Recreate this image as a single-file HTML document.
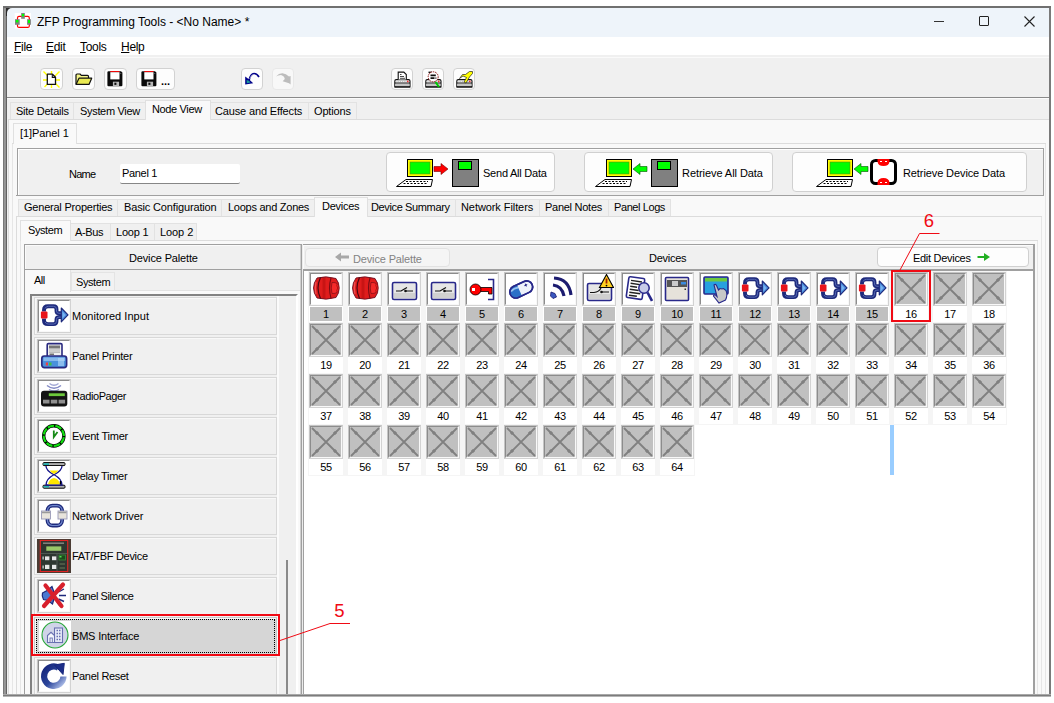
<!DOCTYPE html><html><head><meta charset="utf-8"><title>ZFP Programming Tools</title><style>
*{box-sizing:border-box;margin:0;padding:0}
html,body{width:1054px;height:703px;overflow:hidden;background:#fff}
body{font-family:"Liberation Sans","DejaVu Sans",sans-serif;font-size:11px;color:#000;position:relative}
.a{position:absolute}
.t{position:absolute;white-space:nowrap;line-height:13px;height:13px;letter-spacing:-0.25px}
.tab{position:absolute;background:#f0f0f0;border:1px solid #e2e2e2;border-bottom:none}
.tab.sel{background:#f9f9f9;border-color:#e0e0e0}
.tb{position:absolute;background:#fdfdfd;border:1px solid #d2d2d2;border-radius:4px}
.big{position:absolute;background:#fdfdfd;border:1px solid #d0d0d0;border-radius:4px}
.sunk{position:absolute;width:34px;height:34px;border:1px solid;border-color:#c4c4c4 #d2d2d2 #d2d2d2 #c4c4c4;background:#fff}
.sunk:before{content:"";position:absolute;left:0;top:0;right:0;bottom:0;border:1px solid;border-color:#8c8c8c #f8f8f8 #f8f8f8 #8c8c8c}
.sunk svg{position:absolute;left:1px;top:1px}
.sunk.e{background:#c0c0c0}
.pi{position:absolute;left:34px;width:243px;height:38px;border:1px solid #d8d8d8;box-shadow:inset 1px 1px 0 #f8f8f8;background:#f0f0f0}
.lab{position:absolute;width:32px;height:14px;text-align:center;line-height:14px;font-size:11px;letter-spacing:-0.25px}
.lab.g{background:#c0c0c0}
.lab.w{background:#fff;box-shadow:0 0 0 1px #fff}
u{text-decoration:underline}
</style></head><body>
<div class="a" style="left:3px;top:6px;width:1048px;height:690px;background:#7a7a7a"></div>
<div class="a" style="left:3px;top:6px;width:4px;height:690px;background:linear-gradient(90deg,#787878 1px,#989898 1px,#929292 3px,#626262 3px)"></div>
<div class="a" style="left:3px;top:6px;width:1048px;height:2px;background:#707070"></div>
<div class="a" style="left:6px;top:8px;width:8px;height:8px;background:#2c2c2c"></div>
<div class="a" style="left:7px;top:8px;width:1042px;height:29px;background:#eef4fa;border-radius:5px 0 0 0"></div>
<div class="a" style="left:7px;top:37px;width:1042px;height:18px;background:#fff"></div>
<div class="a" style="left:7px;top:55px;width:1042px;height:640px;background:#f0f0f0"></div>
<div class="a" style="left:7px;top:57px;width:1042px;height:1px;background:#fafafa"></div>
<svg class="a" style="left:14px;top:12px" width="18" height="18" viewBox="14 12 18 18">
<rect x="14.7" y="13" width="16.3" height="15.5" fill="#fff"/>
<rect x="17.5" y="16.4" width="11.8" height="11" rx="1.5" fill="#fff" stroke="#f00" stroke-width="1.2"/>
<rect x="21.2" y="13" width="3.6" height="5.8" fill="#808080"/><rect x="21.9" y="14" width="2.2" height="2.3" fill="#0f0"/>
<rect x="15" y="19.2" width="4.7" height="5.6" fill="#808080"/><rect x="15.8" y="20" width="2.6" height="2.4" fill="#0f0"/>
<rect x="27.1" y="19.2" width="3.8" height="5.6" fill="#808080"/><rect x="28" y="20" width="2" height="3" fill="#0f0"/>
</svg>
<div class="t" id="title" style="left:37px;top:15px;font-size:12px;line-height:15px;height:15px;letter-spacing:0">ZFP Programming Tools - &lt;No Name&gt; *</div>
<div class="a" style="left:934px;top:21px;width:10px;height:1px;background:#333"></div>
<div class="a" style="left:979px;top:16px;width:10px;height:10px;border:1px solid #222;border-radius:1px"></div>
<svg class="a" style="left:1024px;top:16px" width="11" height="11" viewBox="0 0 11 11"><path d="M0.5 0.5L10.5 10.5M10.5 0.5L0.5 10.5" stroke="#222" stroke-width="1.1" fill="none"/></svg>
<div class="t m" style="left:14px;top:40px;font-size:12px;line-height:15px;height:15px;letter-spacing:-0.3px"><u>F</u>ile</div>
<div class="t m" style="left:46px;top:40px;font-size:12px;line-height:15px;height:15px;letter-spacing:-0.3px"><u>E</u>dit</div>
<div class="t m" style="left:80px;top:40px;font-size:12px;line-height:15px;height:15px;letter-spacing:-0.3px"><u>T</u>ools</div>
<div class="t m" style="left:121px;top:40px;font-size:12px;line-height:15px;height:15px;letter-spacing:-0.3px"><u>H</u>elp</div>
<div class="tb" style="left:39.5px;top:68px;width:23px;height:22px;"><svg style="position:absolute;left:-1px;top:-1px" width="23" height="22" viewBox="0 0 23 22"><path d="M3.5 3.5L8 8M19.5 3.5L14 9M3 12H7M16 12H20M4.5 19L8 15.5M19.5 19.5L15.5 15.5M11.5 3V6M11.5 17V20" stroke="#ff0" stroke-width="1.4"/>
<path d="M7.3 6.2H12.5L15.5 9.2V16.4H7.3Z" fill="#fff" stroke="#111" stroke-width="1.3" stroke-linejoin="round"/><path d="M12.3 6.5V9.4H15.3" fill="none" stroke="#111" stroke-width="1.1"/></svg></div>
<div class="tb" style="left:71.5px;top:68px;width:23px;height:22px;"><svg style="position:absolute;left:-1px;top:-1px" width="23" height="22" viewBox="0 0 23 22"><path d="M4 16V7Q4 6 5 6H8L9.3 7.3H15.5Q16.5 7.3 16.5 8.3V10" fill="#f6f68a" stroke="#111" stroke-width="1.2" stroke-linejoin="round"/>
<path d="M4 16.4L7 10.2H19.7L17 16.4Z" fill="#eaea52" stroke="#111" stroke-width="1.2" stroke-linejoin="round"/></svg></div>
<div class="tb" style="left:103.5px;top:68px;width:23px;height:22px;"><svg style="position:absolute;left:-1px;top:-1px" width="23" height="22" viewBox="0 0 23 22"><g transform="translate(0,0)"><path d="M3.4 4.3Q3.4 3.2 4.5 3.2H17L18.4 4.6V17.2Q18.4 18.3 17.3 18.3H4.5Q3.4 18.3 3.4 17.2Z" fill="#0a0a0a"/>
<rect x="6.3" y="3.1" width="9.2" height="1.1" fill="#f00"/><rect x="6.3" y="4.2" width="9.2" height="7.2" fill="#fff"/>
<rect x="8.9" y="13.7" width="6.2" height="4.6" fill="#b8b8b8"/><rect x="10.4" y="14.7" width="2" height="2.2" fill="#0a0a0a"/><rect x="16.4" y="5" width="0.8" height="0.8" fill="#999"/></g></svg></div>
<div class="tb" style="left:135.5px;top:68px;width:39px;height:22px;"><svg style="position:absolute;left:-1px;top:-1px" width="39" height="22" viewBox="0 0 39 22"><g transform="translate(2,0)"><path d="M3.4 4.3Q3.4 3.2 4.5 3.2H17L18.4 4.6V17.2Q18.4 18.3 17.3 18.3H4.5Q3.4 18.3 3.4 17.2Z" fill="#0a0a0a"/>
<rect x="6.3" y="3.1" width="9.2" height="1.1" fill="#f00"/><rect x="6.3" y="4.2" width="9.2" height="7.2" fill="#fff"/>
<rect x="8.9" y="13.7" width="6.2" height="4.6" fill="#b8b8b8"/><rect x="10.4" y="14.7" width="2" height="2.2" fill="#0a0a0a"/><rect x="16.4" y="5" width="0.8" height="0.8" fill="#999"/></g></svg></div>
<div class="t" style="left:161px;top:75px;letter-spacing:0;font-weight:bold">...</div>
<div class="tb" style="left:240.5px;top:68px;width:22px;height:22px;"><svg style="position:absolute;left:-1px;top:-1px" width="22" height="22" viewBox="0 0 22 22"><path d="M8 12.5Q9.5 5.5 13 5.5Q16 5.5 18 9" fill="none" stroke="#00008b" stroke-width="1.7"/><path d="M8.6 11Q10 6.8 12.5 6.5" fill="none" stroke="#b8b8d8" stroke-width="0.7"/>
<path d="M4.2 8.5V16.5L12.2 15.2L8.5 11.8Z" fill="#00008b"/><path d="M5.6 12L8 12.8L9.5 14.5L5.8 15.3Z" fill="#1a9a9a"/></svg></div>
<div class="tb" style="left:271.5px;top:68px;width:22px;height:22px;background:#f8f8f8;border-color:#e8e8e8"><svg style="position:absolute;left:-1px;top:-1px" width="22" height="22" viewBox="0 0 22 22"><path d="M4 8.6Q7 5 10.5 5.2Q14 5.5 17 8.5L18.6 8V16.5L17 15.2L10.7 13.2L12.8 11Q12.5 8 9 7Q6 7 4 8.6Z" fill="#bdbdbd"/></svg></div>
<div class="tb" style="left:390.5px;top:68px;width:22px;height:22px;"><svg style="position:absolute;left:-1px;top:-1px" width="22" height="22" viewBox="0 0 22 22"><path d="M3.8 19V13Q3.8 11.6 5.2 11.6H17.6Q19 11.6 19 13V19Z" fill="#fff" stroke="#111" stroke-width="1.1"/><rect x="4.4" y="15.6" width="14" height="2.6" fill="#c4c4c4"/><path d="M3.8 15H19M3.8 18.9H19" stroke="#111" stroke-width="1.1"/>
<path d="M5.5 13.3H15.5" stroke="#bbb" stroke-width="1.2" stroke-dasharray="1 0.8"/><rect x="16" y="12.6" width="1.6" height="1.6" fill="#f03030"/><path d="M7.2 11.6V4.1H12.8L15.3 6.6V11.6" fill="#fff" stroke="#111" stroke-width="1.1"/><path d="M9 6.5H10.5M9 8.5H13M9 10.3H14" stroke="#333" stroke-width="0.9"/></svg></div>
<div class="tb" style="left:421.5px;top:68px;width:22px;height:22px;"><svg style="position:absolute;left:-1px;top:-1px" width="22" height="22" viewBox="0 0 22 22"><path d="M3.8 19V13Q3.8 11.6 5.2 11.6H17.6Q19 11.6 19 13V19Z" fill="#fff" stroke="#111" stroke-width="1.1"/><rect x="4.4" y="15.6" width="14" height="2.6" fill="#c4c4c4"/><path d="M3.8 15H19M3.8 18.9H19" stroke="#111" stroke-width="1.1"/>
<path d="M5.5 13.3H15.5" stroke="#bbb" stroke-width="1.2" stroke-dasharray="1 0.8"/><rect x="16" y="12.6" width="1.6" height="1.6" fill="#f03030"/><path d="M6.5 4.3H10" stroke="#111" stroke-width="1.4"/><circle cx="11.2" cy="8.8" r="5" fill="#fff" stroke="#8a1010" stroke-width="1" stroke-dasharray="1.6 0.9"/><path d="M8.5 7.3H13.8M8.5 10.2H12.5M13.5 10.2H14.3" stroke="#111" stroke-width="1.7"/><path d="M13.5 14L17 19" stroke="#0c0" stroke-width="2"/></svg></div>
<div class="tb" style="left:452.5px;top:68px;width:22px;height:22px;"><svg style="position:absolute;left:-1px;top:-1px" width="22" height="22" viewBox="0 0 22 22"><path d="M3.8 19V13Q3.8 11.6 5.2 11.6H17.6Q19 11.6 19 13V19Z" fill="#fff" stroke="#111" stroke-width="1.1"/><rect x="4.4" y="15.6" width="14" height="2.6" fill="#c4c4c4"/><path d="M3.8 15H19M3.8 18.9H19" stroke="#111" stroke-width="1.1"/>
<path d="M5.5 13.3H15.5" stroke="#bbb" stroke-width="1.2" stroke-dasharray="1 0.8"/><rect x="16" y="12.6" width="1.6" height="1.6" fill="#f03030"/><path d="M6.5 10.5L10 8L13.5 9.5L11 14L13 15L16.5 9L19.5 5.5V3.5H16.5L12.5 6.5L9.5 6.5Z" fill="#ff0" stroke="#222" stroke-width="0.7"/></svg></div>
<div class="a" style="left:7px;top:97px;width:1042px;height:1px;background:#8a8a8a"></div>
<div class="a" style="left:7px;top:98px;width:1042px;height:1px;background:#fbfbfb"></div>
<div class="a" style="left:8px;top:119px;width:1041px;height:576px;background:#f9f9f9;border-top:1px solid #dcdcdc;border-left:1px solid #dcdcdc"></div>
<div class="tab" style="left:10px;top:102px;width:64px;height:17px"></div>
<div class="t" style="left:16px;top:105px;letter-spacing:-0.25px">Site Details</div>
<div class="tab" style="left:73px;top:102px;width:74px;height:17px"></div>
<div class="t" style="left:80px;top:105px;letter-spacing:-0.32px">System View</div>
<div class="tab" style="left:209px;top:102px;width:100px;height:17px"></div>
<div class="t" style="left:215px;top:105px;letter-spacing:-0.15px">Cause and Effects</div>
<div class="tab" style="left:308px;top:102px;width:49px;height:17px"></div>
<div class="t" style="left:314px;top:105px;letter-spacing:-0.16px">Options</div>
<div class="tab sel" style="left:145px;top:100px;width:66px;height:20px"></div>
<div class="t" style="left:152px;top:103px;letter-spacing:-0.36px">Node View</div>
<div class="a" style="left:12px;top:143px;width:1034px;height:1px;background:#dcdcdc"></div>
<div class="tab sel" style="left:13px;top:123px;width:64px;height:21px"></div>
<div class="t" style="left:20px;top:127px;letter-spacing:-0.08px">[1]Panel 1</div>
<div class="a" style="left:12px;top:144px;width:1px;height:551px;background:#e6e6e6"></div>
<div class="a" style="left:1045px;top:144px;width:1px;height:551px;background:#e6e6e6"></div>
<div class="a" style="left:17px;top:148px;width:1027px;height:48px;background:#f0f0f0;border:1px solid #a0a0a0;box-shadow:inset 1px 1px 0 #fff"></div>
<div class="a" style="left:16px;top:195px;width:1028px;height:1px;background:#a0a0a0"></div>
<div class="t" style="left:69px;top:168px;letter-spacing:-0.76px">Name</div>
<div class="a" style="left:120px;top:164px;width:120px;height:20px;background:#fff;border-bottom:1px solid #868686;border-radius:2px"></div>
<div class="t" style="left:122px;top:167px;letter-spacing:-0.32px">Panel 1</div>
<div class="big" style="left:386px;top:152px;width:169px;height:40px"></div>
<svg class="a" style="left:386px;top:152px;overflow:visible" width="169" height="40"><g transform="translate(21,7)"><g><rect x="0.5" y="0.5" width="25" height="17" fill="#ff0" stroke="#000"/><rect x="3" y="3" width="20" height="12" fill="#0f0" stroke="#6a8a00" stroke-width="0.6"/>
<path d="M-1 20.5H25.5L24 27.5H-10.5Z" fill="#fff" stroke="#000"/><path d="M-1 22.5H21M-3.5 24.5H20" stroke="#000" stroke-dasharray="2 1.5" stroke-width="1"/></g></g><g transform="translate(48,17)"><path d="M0 -2.5H7V-5.5L14 0L7 5.5V2.5H0Z" fill="#f00" stroke="#700" stroke-width="0.6"/></g><g transform="translate(66,7)"><g><rect x="0.5" y="0.5" width="26" height="27" fill="#808080" stroke="#000"/><rect x="6.5" y="2.5" width="13" height="8" fill="#0f0" stroke="#000"/></g></g></svg>
<div class="t" style="left:483px;top:167px;letter-spacing:-0.23px">Send All Data</div>
<div class="big" style="left:584px;top:152px;width:189px;height:40px"></div>
<svg class="a" style="left:584px;top:152px;overflow:visible" width="189" height="40"><g transform="translate(22,7)"><g><rect x="0.5" y="0.5" width="25" height="17" fill="#ff0" stroke="#000"/><rect x="3" y="3" width="20" height="12" fill="#0f0" stroke="#6a8a00" stroke-width="0.6"/>
<path d="M-1 20.5H25.5L24 27.5H-10.5Z" fill="#fff" stroke="#000"/><path d="M-1 22.5H21M-3.5 24.5H20" stroke="#000" stroke-dasharray="2 1.5" stroke-width="1"/></g></g><g transform="translate(49,17)"><path d="M14 -2.5H7V-5.5L0 0L7 5.5V2.5H14Z" fill="#0f0" stroke="#050" stroke-width="0.6"/></g><g transform="translate(67,7)"><g><rect x="0.5" y="0.5" width="26" height="27" fill="#808080" stroke="#000"/><rect x="6.5" y="2.5" width="13" height="8" fill="#0f0" stroke="#000"/></g></g></svg>
<div class="t" style="left:682px;top:167px;letter-spacing:-0.06px">Retrieve All Data</div>
<div class="big" style="left:792px;top:152px;width:235px;height:40px"></div>
<svg class="a" style="left:792px;top:152px;overflow:visible" width="235" height="40"><g transform="translate(35,7)"><g><rect x="0.5" y="0.5" width="25" height="17" fill="#ff0" stroke="#000"/><rect x="3" y="3" width="20" height="12" fill="#0f0" stroke="#6a8a00" stroke-width="0.6"/>
<path d="M-1 20.5H25.5L24 27.5H-10.5Z" fill="#fff" stroke="#000"/><path d="M-1 22.5H21M-3.5 24.5H20" stroke="#000" stroke-dasharray="2 1.5" stroke-width="1"/></g></g><g transform="translate(62,17)"><path d="M14 -2.5H7V-5.5L0 0L7 5.5V2.5H14Z" fill="#0f0" stroke="#050" stroke-width="0.6"/></g><g transform="translate(78,7)"><g><rect x="1.5" y="1.5" width="24" height="23" rx="4" fill="#fff" stroke="#000" stroke-width="3"/>
<path d="M7.5 0H19.5V2.5Q19 7 13.5 7Q8 7 7.5 2.5Z" fill="#f00"/><path d="M7.5 26H19.5V23.5Q19 19 13.5 19Q8 19 7.5 23.5Z" fill="#f00"/>
<path d="M10 2.5H12M15 2.5H17M10 23.5H12M15 23.5H17" stroke="#fff" stroke-width="1"/></g></g></svg>
<div class="t" style="left:903px;top:167px;letter-spacing:-0.1px">Retrieve Device Data</div>
<div class="a" style="left:16px;top:216px;width:1026px;height:479px;background:#f9f9f9;border-top:1px solid #dcdcdc;border-left:1px solid #dcdcdc"></div>
<div class="tab" style="left:18px;top:199px;width:100px;height:17px"></div>
<div class="t" style="left:24px;top:201px;letter-spacing:-0.22px">General Properties</div>
<div class="tab" style="left:117px;top:199px;width:105px;height:17px"></div>
<div class="t" style="left:124px;top:201px;letter-spacing:-0.15px">Basic Configuration</div>
<div class="tab" style="left:221px;top:199px;width:95px;height:17px"></div>
<div class="t" style="left:228px;top:201px;letter-spacing:-0.26px">Loops and Zones</div>
<div class="tab" style="left:366px;top:199px;width:90px;height:17px"></div>
<div class="t" style="left:371px;top:201px;letter-spacing:-0.37px">Device Summary</div>
<div class="tab" style="left:455px;top:199px;width:85px;height:17px"></div>
<div class="t" style="left:461px;top:201px;letter-spacing:-0.08px">Network Filters</div>
<div class="tab" style="left:539px;top:199px;width:70px;height:17px"></div>
<div class="t" style="left:545px;top:201px;letter-spacing:-0.27px">Panel Notes</div>
<div class="tab" style="left:608px;top:199px;width:63px;height:17px"></div>
<div class="t" style="left:614px;top:201px;letter-spacing:-0.41px">Panel Logs</div>
<div class="tab sel" style="left:314px;top:197px;width:54px;height:20px"></div>
<div class="t" style="left:322px;top:200px;letter-spacing:-0.27px">Devices</div>
<div class="a" style="left:20px;top:240px;width:1018px;height:1px;background:#dcdcdc"></div>
<div class="tab" style="left:69px;top:223px;width:42px;height:17px"></div>
<div class="t" style="left:75px;top:226px;letter-spacing:-0.37px">A-Bus</div>
<div class="tab" style="left:110px;top:223px;width:45px;height:17px"></div>
<div class="t" style="left:116px;top:226px;letter-spacing:-0.21px">Loop 1</div>
<div class="tab" style="left:154px;top:223px;width:43px;height:17px"></div>
<div class="t" style="left:160px;top:226px;letter-spacing:-0.08px">Loop 2</div>
<div class="tab sel" style="left:20px;top:220px;width:51px;height:21px"></div>
<div class="t" style="left:28px;top:224px;letter-spacing:-0.41px">System</div>
<div class="a" style="left:20px;top:241px;width:1px;height:454px;background:#e6e6e6"></div>
<div class="a" style="left:1037px;top:241px;width:1px;height:454px;background:#e6e6e6"></div>
<div class="a" style="left:1041px;top:217px;width:1px;height:478px;background:#e6e6e6"></div>
<div class="a" style="left:24px;top:244px;width:278px;height:451px;background:#f0f0f0;border-top:1px solid #a0a0a0;border-left:1px solid #a0a0a0;box-shadow:inset 1px 1px 0 #fbfbfb"></div>
<div class="a" style="left:300px;top:245px;width:1px;height:450px;background:#cfcfcf"></div>
<div class="a" style="left:301px;top:244px;width:1px;height:451px;background:#a0a0a0"></div>
<div class="a" style="left:302px;top:244px;width:1px;height:451px;background:#ececec"></div>
<div class="a" style="left:25px;top:269px;width:276px;height:1px;background:#a0a0a0"></div>
<div class="t" style="left:129px;top:252px;letter-spacing:-0.15px">Device Palette</div>
<div class="a" style="left:25px;top:290px;width:275px;height:405px;background:#f9f9f9;border-top:1px solid #e2e2e2"></div>
<div class="a" style="left:25px;top:270px;width:46px;height:22px;background:#f9f9f9;border-right:1px solid #e2e2e2"></div>
<div class="t" style="left:34px;top:274px;letter-spacing:-0.48px">All</div>
<div class="a" style="left:71px;top:272px;width:44px;height:19px;background:#f2f2f2;border:1px solid #e4e4e4"></div>
<div class="t" style="left:76px;top:276px;letter-spacing:-0.41px">System</div>
<div class="a" style="left:30px;top:294px;width:268px;height:401px;border:2px solid #828282;border-right:2px solid #fff;border-bottom:none;background:#f0f0f0"></div>
<div class="a" style="left:277px;top:296px;width:2px;height:399px;background:#fafafa"></div>
<div class="a" style="left:286px;top:560px;width:2px;height:135px;background:#8a8a8a"></div>
<div class="pi" style="top:297px"></div>
<div class="sunk" style="left:37px;top:299px"><svg width="30" height="30" viewBox="0 0 30 30"><path d="M5 10.5V9Q5 5.3 9 5.3H14.5Q17.5 5.3 17.5 8.3V10Q17.5 12.3 20 12.3H22.5M5 17.5V19.5Q5 23.1 9 23.1H14.5Q17.5 23.1 17.5 20.1V18.4Q17.5 16.1 20 16.1H22.5" fill="none" stroke="#1e2a7c" stroke-width="3.9"/>
<path d="M6 7.5Q7 5.3 9.5 5.3H14.5Q17.5 5.3 17.5 8.3V10Q17.5 12.3 20 12.3H22.5M6 21Q7 23.1 9.5 23.1H14.5Q17.5 23.1 17.5 20.1V18.4Q17.5 16.1 20 16.1H22.5" fill="none" stroke="#5468b4" stroke-width="1"/>
<path d="M22.3 7L29 13.9L22.3 20.8Z" fill="#4a8cdc" stroke="#1e2a7c" stroke-width="1.2" stroke-linejoin="round"/><path d="M23.5 10.5V17.5L26.5 14Z" fill="#7ab4f0"/>
<rect x="1.9" y="10.5" width="6.6" height="6.9" rx="1" fill="#e8141c"/></svg></div>
<div class="t" style="left:72px;top:310px;letter-spacing:0.04px">Monitored Input</div>
<div class="pi" style="top:337px"></div>
<div class="sunk" style="left:37px;top:339px"><svg width="30" height="30" viewBox="0 0 30 30"><path d="M8.2 15V3.8Q8.2 2.6 9.4 2.6H21.8Q23 2.6 23 3.8V15" fill="#f0f0f0" stroke="#2a2a80" stroke-width="1.6"/>
<rect x="10" y="4.5" width="11" height="3" fill="#777"/><path d="M10 9H21M10 11.2H21" stroke="#aaa" stroke-width="1.2"/><path d="M10.5 13.2H15" stroke="#555" stroke-width="1.2"/>
<rect x="2.8" y="15" width="24.8" height="11.6" rx="2.5" fill="#4a90dc" stroke="#2a2a80" stroke-width="1.7"/>
<rect x="4.5" y="16.5" width="21.5" height="3.5" fill="#a8d0f4" opacity=".65"/><rect x="19" y="17" width="6" height="8" fill="#b8dcf8" opacity=".6"/>
<rect x="6.8" y="21.5" width="2.2" height="3" fill="#f04040"/><rect x="10" y="21.5" width="2.5" height="3" fill="#40c040"/></svg></div>
<div class="t" style="left:72px;top:350px;letter-spacing:-0.25px">Panel Printer</div>
<div class="pi" style="top:377px"></div>
<div class="sunk" style="left:37px;top:379px"><svg width="30" height="30" viewBox="0 0 30 30"><path d="M8 4.5Q15 10 22 4.5" fill="none" stroke="#8088c4" stroke-width="1.5"/><path d="M10.5 2.5Q15 6 19.5 2.5" fill="none" stroke="#a0a6d4" stroke-width="1.3"/><path d="M10 8.5Q15 11.5 20 8.5" fill="none" stroke="#9096cc" stroke-width="1.3"/>
<rect x="2" y="9.8" width="26.3" height="15.7" rx="3" fill="#141414"/>
<rect x="9.8" y="12.3" width="16" height="2.8" fill="#6cc83c"/>
<rect x="4" y="18.7" width="6.5" height="3.8" fill="#909090"/><rect x="11.8" y="18.7" width="6.5" height="3.8" fill="#909090"/><rect x="19.6" y="18.7" width="6.5" height="3.8" fill="#909090"/></svg></div>
<div class="t" style="left:72px;top:390px;letter-spacing:-0.41px">RadioPager</div>
<div class="pi" style="top:417px"></div>
<div class="sunk" style="left:37px;top:419px"><svg width="30" height="30" viewBox="0 0 30 30"><circle cx="14.8" cy="14.9" r="10.1" fill="#fff" stroke="#000" stroke-width="3.4"/><circle cx="14.8" cy="14.9" r="10.1" fill="none" stroke="#10e010" stroke-width="2"/>
<circle cx="14.8" cy="14.9" r="10.1" fill="none" stroke="#000" stroke-width="2.2" stroke-dasharray="1.3 6.63"/>
<path d="M14.8 9.5V16L18.5 11" fill="none" stroke="#168a16" stroke-width="1.8"/></svg></div>
<div class="t" style="left:72px;top:430px;letter-spacing:-0.24px">Event Timer</div>
<div class="pi" style="top:457px"></div>
<div class="sunk" style="left:37px;top:459px"><svg width="30" height="30" viewBox="0 0 30 30"><rect x="4" y="1.6" width="22" height="3" rx="1" fill="#b0b0b0" stroke="#000" stroke-width="1"/><rect x="4" y="24.2" width="22" height="3" rx="1" fill="#b0b0b0" stroke="#000" stroke-width="1"/><path d="M4.5 3.1H10M4.5 25.7H10" stroke="#20b0b0" stroke-width="1.6"/>
<path d="M7 5Q7 9.5 14.8 13.7Q7 18 7 24H23Q23 18 15.2 13.7Q23 9.5 23 5" fill="#fff" stroke="#14148c" stroke-width="1.3"/>
<path d="M10.5 9.5H19.5Q17.5 11.5 15 13Q12.5 11.5 10.5 9.5Z" fill="#ffe800"/><path d="M9 23.3Q10 18 15 17Q20 18 21 23.3Z" fill="#ffe800"/><path d="M21.5 20V23.5" stroke="#000" stroke-width="1.4"/></svg></div>
<div class="t" style="left:72px;top:470px;letter-spacing:-0.31px">Delay Timer</div>
<div class="pi" style="top:497px"></div>
<div class="sunk" style="left:37px;top:499px"><svg width="30" height="30" viewBox="0 0 30 30"><rect x="8.5" y="4.7" width="14.6" height="19.8" rx="5" fill="none" stroke="#1e2a7c" stroke-width="3.8"/><rect x="8.5" y="4.7" width="14.6" height="19.8" rx="5" fill="none" stroke="#7088cc" stroke-width="1.2"/>
<rect x="2.5" y="10" width="9" height="8" fill="#e8e4dc" stroke="#9a9ab8" stroke-width="0.9"/><rect x="19" y="10" width="9" height="8" fill="#e8e4dc" stroke="#9a9ab8" stroke-width="0.9"/>
<path d="M3 11.5H11M19.5 11.5H27.5" stroke="#9a9a9a" stroke-width="1.6"/></svg></div>
<div class="t" style="left:72px;top:510px;letter-spacing:-0.1px">Network Driver</div>
<div class="pi" style="top:537px"></div>
<svg class="a" style="left:37px;top:539px" width="34" height="34" viewBox="0 0 34 34"><rect x="0" y="0" width="34" height="34" fill="#4a3c34"/><rect x="3.3" y="1.5" width="27.4" height="31" fill="#2e3630" stroke="#e02424" stroke-width="1.1"/>
<rect x="6" y="3.5" width="21" height="1.4" fill="#8a8a84"/><rect x="9.3" y="7.4" width="15" height="4.4" fill="#98c868"/>
<path d="M3.5 14.5H30.5M20 14.5V32" stroke="#55605a" stroke-width="0.8"/>
<rect x="8" y="17.4" width="4.4" height="3.8" fill="#e6e6e6"/><rect x="15" y="17.4" width="4.3" height="3.8" fill="#e6e6e6"/><rect x="8" y="25.8" width="4.4" height="4.2" fill="#e6e6e6"/><rect x="15" y="25.8" width="4.3" height="4.2" fill="#e6e6e6"/>
<rect x="5.5" y="17.5" width="1.2" height="3" fill="#ddd"/><rect x="5.5" y="26.5" width="1.2" height="3" fill="#ddd"/>
<rect x="22" y="16" width="6.5" height="5" fill="#1c4a1c" stroke="#3a8a3a" stroke-width="0.8"/><rect x="22.5" y="17" width="2" height="1.5" fill="#50e050"/><path d="M22.5 25H28M22.5 29H28" stroke="#6a7a5a" stroke-width="1.2"/></svg>
<div class="t" style="left:72px;top:550px;letter-spacing:-0.29px">FAT/FBF Device</div>
<div class="pi" style="top:577px"></div>
<div class="sunk" style="left:37px;top:579px"><svg width="30" height="30" viewBox="0 0 30 30"><path d="M3.5 12L9 9L13 5.5Q17 14 13.5 23L9 19.5L4.5 18.5Q2.5 15 3.5 12Z" fill="#4a78d0" stroke="#1e2a7c" stroke-width="1.2"/><path d="M18 8.5L22 4.5M19.5 11L25 8M20 14.5H27M19.5 18L25 20.5M18 21L21 25" stroke="#1e2a7c" stroke-width="1.4"/>
<path d="M6.5 4.5L22.5 25M24 3.5L5 25" stroke="#d8202c" stroke-width="4.2" stroke-linecap="round"/></svg></div>
<div class="t" style="left:72px;top:590px;letter-spacing:-0.44px">Panel Silence</div>
<div class="pi" style="top:617px;background:#d6d6d6;border-color:#c8c8c8"></div>
<div class="a" style="left:36px;top:619px;width:239px;height:34px;border:1px dotted #000"></div>
<div class="a" style="left:39px;top:621px;width:32px;height:30px;background:#fff"></div>
<svg class="a" style="left:39.5px;top:620px" width="30" height="30" viewBox="0 0 30 30"><circle cx="15" cy="15" r="13" fill="#d0d4e8" stroke="#28a838" stroke-width="1.1"/>
<rect x="14.5" y="8" width="8" height="14.5" fill="#e8ecf8" stroke="#6870b0" stroke-width="1.1"/><path d="M16.5 10.5H20.5M16.5 13.5H20.5M16.5 16.5H20.5M16.5 19.5H20.5" stroke="#6870b0" stroke-width="1.6" stroke-dasharray="1.5 1"/>
<path d="M7.5 22.5V15.5L11 12.3L14.5 15.5V22.5Z" fill="#f4f6fc" stroke="#6870b0" stroke-width="1.1"/><rect x="10" y="18" width="2.3" height="4.5" fill="#f4f6fc" stroke="#6870b0" stroke-width="0.9"/></svg>
<div class="t" style="left:72px;top:630px;letter-spacing:-0.19px">BMS Interface</div>
<div class="pi" style="top:657px"></div>
<div class="sunk" style="left:37px;top:659px"><svg width="30" height="30" viewBox="0 0 30 30"><defs><linearGradient id="rg" x1="0" y1="0" x2="1" y2="1"><stop offset="0" stop-color="#16267c"/><stop offset=".55" stop-color="#2c469c"/><stop offset="1" stop-color="#b4c4ec"/></linearGradient></defs>
<path d="M19.5 6.7A9.7 9.7 0 1 0 24.5 15.5" fill="none" stroke="url(#rg)" stroke-width="6.2"/>
<path d="M15.5 4L25.3 2.3L24 13.5Z" fill="#1c2e88" stroke="#16267c" stroke-width="1" stroke-linejoin="round"/></svg></div>
<div class="t" style="left:72px;top:670px;letter-spacing:-0.3px">Panel Reset</div>
<div class="a" style="left:303px;top:244px;width:732px;height:451px;background:#fff;border-top:1px solid #a0a0a0;border-left:1px solid #a0a0a0;border-right:2px solid #a0a0a0"></div>
<div class="a" style="left:303px;top:245px;width:730px;height:24px;background:#f0f0f0;border-top:1px solid #fbfbfb;border-left:1px solid #fbfbfb"></div>
<div class="a" style="left:303px;top:269px;width:732px;height:2px;background:#a0a0a0"></div>
<div class="big" style="left:305px;top:248px;width:145px;height:19px;background:#f5f5f5;border-color:#e2e2e2"></div>
<svg class="a" style="left:335px;top:252px" width="14" height="10" viewBox="0 0 14 10"><path d="M0 5L6 0.5V3.5H14V6.5H6V9.5Z" fill="#a8a8a8"/></svg>
<div class="t" style="left:353px;top:253px;color:#838383;letter-spacing:-0.15px">Device Palette</div>
<div class="t" style="left:649px;top:252px;letter-spacing:-0.27px">Devices</div>
<div class="big" style="left:877px;top:247px;width:152px;height:20px"></div>
<div class="t" style="left:913px;top:252px;letter-spacing:-0.29px">Edit Devices</div>
<svg class="a" style="left:977px;top:252px" width="14" height="10" viewBox="0 0 14 10"><path d="M13 5L7 1V4H0.5V6H7V9Z" fill="#22b022"/></svg>
<div class="a" style="left:308px;top:271px;width:699px;height:52px;background:#f5f5f5"></div>
<div class="a" style="left:308px;top:322px;width:699px;height:52px;background:#f5f5f5"></div>
<div class="a" style="left:308px;top:373px;width:699px;height:52px;background:#f5f5f5"></div>
<div class="a" style="left:308px;top:424px;width:387px;height:52px;background:#f5f5f5"></div>
<div class="sunk" style="left:309px;top:272px"><svg width="30" height="30" viewBox="0 0 30 30"><path d="M6 4Q15 1.5 25 4.5Q28.5 9 28 14Q28.5 19 25 23.5Q15 26.5 6 24Q-1 14 6 4Z" fill="#df1c1c" stroke="#6a1020" stroke-width="0.9"/>
<path d="M9.5 3.5Q4.5 14 9.5 24.5" fill="none" stroke="#4a0812" stroke-width="1.2"/><path d="M5 8Q3.5 14 5 20" fill="none" stroke="#f25050" stroke-width="1.2"/>
<path d="M20 4Q17 14 20 24.3" fill="none" stroke="#7a0c14" stroke-width="1.1"/><path d="M13 4V24" stroke="#c81414" stroke-width="3"/>
<path d="M21 8.5Q28 8 28 14Q28 20 21 19.5Q19.5 14 21 8.5Z" fill="#f42a2a" stroke="#8a1018" stroke-width="0.8"/><path d="M25.5 10.5Q27.8 14 25.5 17.5" fill="none" stroke="#b01010" stroke-width="0.9"/></svg></div>
<div class="a" style="left:309px;top:306px;width:34px;height:16px;background:#fff"></div>
<div class="lab g" style="left:310px;top:307px">1</div>
<div class="sunk" style="left:348px;top:272px"><svg width="30" height="30" viewBox="0 0 30 30"><path d="M6 4Q15 1.5 25 4.5Q28.5 9 28 14Q28.5 19 25 23.5Q15 26.5 6 24Q-1 14 6 4Z" fill="#df1c1c" stroke="#6a1020" stroke-width="0.9"/>
<path d="M9.5 3.5Q4.5 14 9.5 24.5" fill="none" stroke="#4a0812" stroke-width="1.2"/><path d="M5 8Q3.5 14 5 20" fill="none" stroke="#f25050" stroke-width="1.2"/>
<path d="M20 4Q17 14 20 24.3" fill="none" stroke="#7a0c14" stroke-width="1.1"/><path d="M13 4V24" stroke="#c81414" stroke-width="3"/>
<path d="M21 8.5Q28 8 28 14Q28 20 21 19.5Q19.5 14 21 8.5Z" fill="#f42a2a" stroke="#8a1018" stroke-width="0.8"/><path d="M25.5 10.5Q27.8 14 25.5 17.5" fill="none" stroke="#b01010" stroke-width="0.9"/></svg></div>
<div class="a" style="left:348px;top:306px;width:34px;height:16px;background:#fff"></div>
<div class="lab g" style="left:349px;top:307px">2</div>
<div class="sunk" style="left:387px;top:272px"><svg width="30" height="30" viewBox="0 0 30 30"><rect x="3.5" y="8.5" width="24" height="17" rx="1.5" fill="#e6e6e6" stroke="#28288a" stroke-width="1.6"/><rect x="5" y="19" width="21" height="5" fill="#d0d0d0"/>
<path d="M7 17H12L18 13.5M16 17H24" stroke="#111" stroke-width="1.2" fill="none"/><circle cx="16.5" cy="17" r="1.3" fill="#111"/></svg></div>
<div class="a" style="left:387px;top:306px;width:34px;height:16px;background:#fff"></div>
<div class="lab g" style="left:388px;top:307px">3</div>
<div class="sunk" style="left:426px;top:272px"><svg width="30" height="30" viewBox="0 0 30 30"><rect x="3.5" y="8.5" width="24" height="17" rx="1.5" fill="#e6e6e6" stroke="#28288a" stroke-width="1.6"/><rect x="5" y="19" width="21" height="5" fill="#d0d0d0"/>
<path d="M7 17H12L18 13.5M16 17H24" stroke="#111" stroke-width="1.2" fill="none"/><circle cx="16.5" cy="17" r="1.3" fill="#111"/></svg></div>
<div class="a" style="left:426px;top:306px;width:34px;height:16px;background:#fff"></div>
<div class="lab g" style="left:427px;top:307px">4</div>
<div class="sunk" style="left:465px;top:272px"><svg width="30" height="30" viewBox="0 0 30 30"><path d="M21 5.5H26.5V25.5H21" fill="none" stroke="#28288a" stroke-width="1.6"/>
<path d="M12 13.5H25V20H21.5V17.5H12Z" fill="#f00" stroke="#000" stroke-width="0.8"/><circle cx="8.5" cy="15.5" r="5.5" fill="#f00" stroke="#000" stroke-width="0.8"/><rect x="5" y="14" width="3" height="3" fill="#fff"/></svg></div>
<div class="a" style="left:465px;top:306px;width:34px;height:16px;background:#fff"></div>
<div class="lab g" style="left:466px;top:307px">5</div>
<div class="sunk" style="left:504px;top:272px"><svg width="30" height="30" viewBox="0 0 30 30"><g transform="rotate(-25 15 15)"><rect x="3" y="9.5" width="24" height="12" rx="6" fill="#eef2fa" stroke="#28288a" stroke-width="1.6"/><path d="M9 9.5H13V21.5H9Q3 21.5 3 15.5Q3 9.5 9 9.5Z" fill="#2a70c8"/><path d="M5 13Q9 11 13 12.5" stroke="#9cc4f0" stroke-width="1.6" fill="none"/>
<rect x="3" y="9.5" width="24" height="12" rx="6" fill="none" stroke="#28288a" stroke-width="1.6"/><path d="M21 12V15M19.5 13.5H22.5" stroke="#28288a" stroke-width="0.9"/></g></svg></div>
<div class="a" style="left:504px;top:306px;width:34px;height:16px;background:#fff"></div>
<div class="lab g" style="left:505px;top:307px">6</div>
<div class="sunk" style="left:543px;top:272px"><svg width="30" height="30" viewBox="0 0 30 30"><path d="M9 4Q24 5 26 21" fill="none" stroke="#1c1c70" stroke-width="3.2"/><path d="M8 11Q17 12 19 22" fill="none" stroke="#1c1c70" stroke-width="3.2"/>
<path d="M6 18L10 19.5L11.5 23L8 24.5L5.5 22Z" fill="#3a58c0" stroke="#1c1c70" stroke-width="0.8"/></svg></div>
<div class="a" style="left:543px;top:306px;width:34px;height:16px;background:#fff"></div>
<div class="lab g" style="left:544px;top:307px">7</div>
<div class="sunk" style="left:582px;top:272px"><svg width="30" height="30" viewBox="0 0 30 30"><rect x="3.5" y="9.5" width="24" height="17" rx="1.5" fill="#e6e6e6" stroke="#28288a" stroke-width="1.6"/><rect x="5" y="20" width="21" height="5" fill="#cfcfcf"/>
<path d="M6 18.5H10Q15 18 17 14M17 18H25" stroke="#111" stroke-width="1.2" fill="none"/><circle cx="17.5" cy="18" r="1.3" fill="#111"/>
<path d="M22.5 0.5L29.5 13.5H15.5Z" fill="#ffd020" stroke="#000" stroke-width="1.1"/><path d="M22.5 4.5V9.5" stroke="#a02000" stroke-width="1.8"/><circle cx="22.5" cy="11.6" r="0.9" fill="#000"/></svg></div>
<div class="a" style="left:582px;top:306px;width:34px;height:16px;background:#fff"></div>
<div class="lab g" style="left:583px;top:307px">8</div>
<div class="sunk" style="left:621px;top:272px"><svg width="30" height="30" viewBox="0 0 30 30"><g transform="rotate(8 12 14)"><rect x="4.5" y="3.5" width="16" height="21" rx="1.5" fill="#fff" stroke="#28288a" stroke-width="1.6"/><path d="M7 7H18M7 10H18M7 13H14M7 16H16M7 19H18M7 22H15" stroke="#222" stroke-width="1.5"/></g>
<circle cx="21" cy="14" r="5.2" fill="#c8cce8" stroke="#28288a" stroke-width="1.5"/><path d="M24.5 18.5L29 27" stroke="#28288a" stroke-width="2.6"/></svg></div>
<div class="a" style="left:621px;top:306px;width:34px;height:16px;background:#fff"></div>
<div class="lab g" style="left:622px;top:307px">9</div>
<div class="sunk" style="left:660px;top:272px"><svg width="30" height="30" viewBox="0 0 30 30"><rect x="3.5" y="3.5" width="23" height="23" rx="1" fill="#e6e2da" stroke="#28288a" stroke-width="1.6"/>
<rect x="5" y="6" width="20" height="7" fill="#555"/><rect x="10" y="7" width="6" height="5" fill="#ccc"/><rect x="19" y="8" width="5" height="2.5" fill="#3a8ae0"/><rect x="22.5" y="14.5" width="1.5" height="1.5" fill="#333"/></svg></div>
<div class="a" style="left:660px;top:306px;width:34px;height:16px;background:#fff"></div>
<div class="lab g" style="left:661px;top:307px">10</div>
<div class="sunk" style="left:699px;top:272px"><svg width="30" height="30" viewBox="0 0 30 30"><rect x="3" y="3" width="24" height="17" rx="1" fill="#28a0e0" stroke="#28288a" stroke-width="1.6"/><rect x="4" y="4" width="22" height="3.5" fill="#6cc840"/>
<path d="M13 11Q14.5 9.5 15.5 11.5L17.5 16L19 14.5L21 15L22.5 14.5L25 16.5Q27 21 24.5 26L18 29L12.5 22Q12.5 20.5 14.5 21L16 22.5Z" fill="#c8c8c8" stroke="#28288a" stroke-width="1.1"/></svg></div>
<div class="a" style="left:699px;top:306px;width:34px;height:16px;background:#fff"></div>
<div class="lab g" style="left:700px;top:307px">11</div>
<div class="sunk" style="left:738px;top:272px"><svg width="30" height="30" viewBox="0 0 30 30"><path d="M5 10.5V9Q5 5.3 9 5.3H14.5Q17.5 5.3 17.5 8.3V10Q17.5 12.3 20 12.3H22.5M5 17.5V19.5Q5 23.1 9 23.1H14.5Q17.5 23.1 17.5 20.1V18.4Q17.5 16.1 20 16.1H22.5" fill="none" stroke="#1e2a7c" stroke-width="3.9"/>
<path d="M6 7.5Q7 5.3 9.5 5.3H14.5Q17.5 5.3 17.5 8.3V10Q17.5 12.3 20 12.3H22.5M6 21Q7 23.1 9.5 23.1H14.5Q17.5 23.1 17.5 20.1V18.4Q17.5 16.1 20 16.1H22.5" fill="none" stroke="#5468b4" stroke-width="1"/>
<path d="M22.3 7L29 13.9L22.3 20.8Z" fill="#4a8cdc" stroke="#1e2a7c" stroke-width="1.2" stroke-linejoin="round"/><path d="M23.5 10.5V17.5L26.5 14Z" fill="#7ab4f0"/>
<rect x="1.9" y="10.5" width="6.6" height="6.9" rx="1" fill="#e8141c"/></svg></div>
<div class="a" style="left:738px;top:306px;width:34px;height:16px;background:#fff"></div>
<div class="lab g" style="left:739px;top:307px">12</div>
<div class="sunk" style="left:777px;top:272px"><svg width="30" height="30" viewBox="0 0 30 30"><path d="M5 10.5V9Q5 5.3 9 5.3H14.5Q17.5 5.3 17.5 8.3V10Q17.5 12.3 20 12.3H22.5M5 17.5V19.5Q5 23.1 9 23.1H14.5Q17.5 23.1 17.5 20.1V18.4Q17.5 16.1 20 16.1H22.5" fill="none" stroke="#1e2a7c" stroke-width="3.9"/>
<path d="M6 7.5Q7 5.3 9.5 5.3H14.5Q17.5 5.3 17.5 8.3V10Q17.5 12.3 20 12.3H22.5M6 21Q7 23.1 9.5 23.1H14.5Q17.5 23.1 17.5 20.1V18.4Q17.5 16.1 20 16.1H22.5" fill="none" stroke="#5468b4" stroke-width="1"/>
<path d="M22.3 7L29 13.9L22.3 20.8Z" fill="#4a8cdc" stroke="#1e2a7c" stroke-width="1.2" stroke-linejoin="round"/><path d="M23.5 10.5V17.5L26.5 14Z" fill="#7ab4f0"/>
<rect x="1.9" y="10.5" width="6.6" height="6.9" rx="1" fill="#e8141c"/></svg></div>
<div class="a" style="left:777px;top:306px;width:34px;height:16px;background:#fff"></div>
<div class="lab g" style="left:778px;top:307px">13</div>
<div class="sunk" style="left:816px;top:272px"><svg width="30" height="30" viewBox="0 0 30 30"><path d="M5 10.5V9Q5 5.3 9 5.3H14.5Q17.5 5.3 17.5 8.3V10Q17.5 12.3 20 12.3H22.5M5 17.5V19.5Q5 23.1 9 23.1H14.5Q17.5 23.1 17.5 20.1V18.4Q17.5 16.1 20 16.1H22.5" fill="none" stroke="#1e2a7c" stroke-width="3.9"/>
<path d="M6 7.5Q7 5.3 9.5 5.3H14.5Q17.5 5.3 17.5 8.3V10Q17.5 12.3 20 12.3H22.5M6 21Q7 23.1 9.5 23.1H14.5Q17.5 23.1 17.5 20.1V18.4Q17.5 16.1 20 16.1H22.5" fill="none" stroke="#5468b4" stroke-width="1"/>
<path d="M22.3 7L29 13.9L22.3 20.8Z" fill="#4a8cdc" stroke="#1e2a7c" stroke-width="1.2" stroke-linejoin="round"/><path d="M23.5 10.5V17.5L26.5 14Z" fill="#7ab4f0"/>
<rect x="1.9" y="10.5" width="6.6" height="6.9" rx="1" fill="#e8141c"/></svg></div>
<div class="a" style="left:816px;top:306px;width:34px;height:16px;background:#fff"></div>
<div class="lab g" style="left:817px;top:307px">14</div>
<div class="sunk" style="left:855px;top:272px"><svg width="30" height="30" viewBox="0 0 30 30"><path d="M5 10.5V9Q5 5.3 9 5.3H14.5Q17.5 5.3 17.5 8.3V10Q17.5 12.3 20 12.3H22.5M5 17.5V19.5Q5 23.1 9 23.1H14.5Q17.5 23.1 17.5 20.1V18.4Q17.5 16.1 20 16.1H22.5" fill="none" stroke="#1e2a7c" stroke-width="3.9"/>
<path d="M6 7.5Q7 5.3 9.5 5.3H14.5Q17.5 5.3 17.5 8.3V10Q17.5 12.3 20 12.3H22.5M6 21Q7 23.1 9.5 23.1H14.5Q17.5 23.1 17.5 20.1V18.4Q17.5 16.1 20 16.1H22.5" fill="none" stroke="#5468b4" stroke-width="1"/>
<path d="M22.3 7L29 13.9L22.3 20.8Z" fill="#4a8cdc" stroke="#1e2a7c" stroke-width="1.2" stroke-linejoin="round"/><path d="M23.5 10.5V17.5L26.5 14Z" fill="#7ab4f0"/>
<rect x="1.9" y="10.5" width="6.6" height="6.9" rx="1" fill="#e8141c"/></svg></div>
<div class="a" style="left:855px;top:306px;width:34px;height:16px;background:#fff"></div>
<div class="lab g" style="left:856px;top:307px">15</div>
<div class="sunk e" style="left:894px;top:272px"><svg width="30" height="30" viewBox="0 0 30 30"><path d="M1 1L29 29M29 1L1 29" stroke="#808080" stroke-width="1.8"/>
<path d="M6 4.2L7.8 6L6 7.8L4.2 6ZM24 4.2L25.8 6L24 7.8L22.2 6ZM6 22.2L7.8 24L6 25.8L4.2 24ZM24 22.2L25.8 24L24 25.8L22.2 24Z" fill="#808080" stroke="#808080" stroke-width="0.6"/></svg></div>
<div class="lab w" style="left:895px;top:307px">16</div>
<div class="sunk e" style="left:933px;top:272px"><svg width="30" height="30" viewBox="0 0 30 30"><path d="M1 1L29 29M29 1L1 29" stroke="#808080" stroke-width="1.8"/>
<path d="M6 4.2L7.8 6L6 7.8L4.2 6ZM24 4.2L25.8 6L24 7.8L22.2 6ZM6 22.2L7.8 24L6 25.8L4.2 24ZM24 22.2L25.8 24L24 25.8L22.2 24Z" fill="#808080" stroke="#808080" stroke-width="0.6"/></svg></div>
<div class="lab w" style="left:934px;top:307px">17</div>
<div class="sunk e" style="left:972px;top:272px"><svg width="30" height="30" viewBox="0 0 30 30"><path d="M1 1L29 29M29 1L1 29" stroke="#808080" stroke-width="1.8"/>
<path d="M6 4.2L7.8 6L6 7.8L4.2 6ZM24 4.2L25.8 6L24 7.8L22.2 6ZM6 22.2L7.8 24L6 25.8L4.2 24ZM24 22.2L25.8 24L24 25.8L22.2 24Z" fill="#808080" stroke="#808080" stroke-width="0.6"/></svg></div>
<div class="lab w" style="left:973px;top:307px">18</div>
<div class="sunk e" style="left:309px;top:323px"><svg width="30" height="30" viewBox="0 0 30 30"><path d="M1 1L29 29M29 1L1 29" stroke="#808080" stroke-width="1.8"/>
<path d="M6 4.2L7.8 6L6 7.8L4.2 6ZM24 4.2L25.8 6L24 7.8L22.2 6ZM6 22.2L7.8 24L6 25.8L4.2 24ZM24 22.2L25.8 24L24 25.8L22.2 24Z" fill="#808080" stroke="#808080" stroke-width="0.6"/></svg></div>
<div class="lab w" style="left:310px;top:358px">19</div>
<div class="sunk e" style="left:348px;top:323px"><svg width="30" height="30" viewBox="0 0 30 30"><path d="M1 1L29 29M29 1L1 29" stroke="#808080" stroke-width="1.8"/>
<path d="M6 4.2L7.8 6L6 7.8L4.2 6ZM24 4.2L25.8 6L24 7.8L22.2 6ZM6 22.2L7.8 24L6 25.8L4.2 24ZM24 22.2L25.8 24L24 25.8L22.2 24Z" fill="#808080" stroke="#808080" stroke-width="0.6"/></svg></div>
<div class="lab w" style="left:349px;top:358px">20</div>
<div class="sunk e" style="left:387px;top:323px"><svg width="30" height="30" viewBox="0 0 30 30"><path d="M1 1L29 29M29 1L1 29" stroke="#808080" stroke-width="1.8"/>
<path d="M6 4.2L7.8 6L6 7.8L4.2 6ZM24 4.2L25.8 6L24 7.8L22.2 6ZM6 22.2L7.8 24L6 25.8L4.2 24ZM24 22.2L25.8 24L24 25.8L22.2 24Z" fill="#808080" stroke="#808080" stroke-width="0.6"/></svg></div>
<div class="lab w" style="left:388px;top:358px">21</div>
<div class="sunk e" style="left:426px;top:323px"><svg width="30" height="30" viewBox="0 0 30 30"><path d="M1 1L29 29M29 1L1 29" stroke="#808080" stroke-width="1.8"/>
<path d="M6 4.2L7.8 6L6 7.8L4.2 6ZM24 4.2L25.8 6L24 7.8L22.2 6ZM6 22.2L7.8 24L6 25.8L4.2 24ZM24 22.2L25.8 24L24 25.8L22.2 24Z" fill="#808080" stroke="#808080" stroke-width="0.6"/></svg></div>
<div class="lab w" style="left:427px;top:358px">22</div>
<div class="sunk e" style="left:465px;top:323px"><svg width="30" height="30" viewBox="0 0 30 30"><path d="M1 1L29 29M29 1L1 29" stroke="#808080" stroke-width="1.8"/>
<path d="M6 4.2L7.8 6L6 7.8L4.2 6ZM24 4.2L25.8 6L24 7.8L22.2 6ZM6 22.2L7.8 24L6 25.8L4.2 24ZM24 22.2L25.8 24L24 25.8L22.2 24Z" fill="#808080" stroke="#808080" stroke-width="0.6"/></svg></div>
<div class="lab w" style="left:466px;top:358px">23</div>
<div class="sunk e" style="left:504px;top:323px"><svg width="30" height="30" viewBox="0 0 30 30"><path d="M1 1L29 29M29 1L1 29" stroke="#808080" stroke-width="1.8"/>
<path d="M6 4.2L7.8 6L6 7.8L4.2 6ZM24 4.2L25.8 6L24 7.8L22.2 6ZM6 22.2L7.8 24L6 25.8L4.2 24ZM24 22.2L25.8 24L24 25.8L22.2 24Z" fill="#808080" stroke="#808080" stroke-width="0.6"/></svg></div>
<div class="lab w" style="left:505px;top:358px">24</div>
<div class="sunk e" style="left:543px;top:323px"><svg width="30" height="30" viewBox="0 0 30 30"><path d="M1 1L29 29M29 1L1 29" stroke="#808080" stroke-width="1.8"/>
<path d="M6 4.2L7.8 6L6 7.8L4.2 6ZM24 4.2L25.8 6L24 7.8L22.2 6ZM6 22.2L7.8 24L6 25.8L4.2 24ZM24 22.2L25.8 24L24 25.8L22.2 24Z" fill="#808080" stroke="#808080" stroke-width="0.6"/></svg></div>
<div class="lab w" style="left:544px;top:358px">25</div>
<div class="sunk e" style="left:582px;top:323px"><svg width="30" height="30" viewBox="0 0 30 30"><path d="M1 1L29 29M29 1L1 29" stroke="#808080" stroke-width="1.8"/>
<path d="M6 4.2L7.8 6L6 7.8L4.2 6ZM24 4.2L25.8 6L24 7.8L22.2 6ZM6 22.2L7.8 24L6 25.8L4.2 24ZM24 22.2L25.8 24L24 25.8L22.2 24Z" fill="#808080" stroke="#808080" stroke-width="0.6"/></svg></div>
<div class="lab w" style="left:583px;top:358px">26</div>
<div class="sunk e" style="left:621px;top:323px"><svg width="30" height="30" viewBox="0 0 30 30"><path d="M1 1L29 29M29 1L1 29" stroke="#808080" stroke-width="1.8"/>
<path d="M6 4.2L7.8 6L6 7.8L4.2 6ZM24 4.2L25.8 6L24 7.8L22.2 6ZM6 22.2L7.8 24L6 25.8L4.2 24ZM24 22.2L25.8 24L24 25.8L22.2 24Z" fill="#808080" stroke="#808080" stroke-width="0.6"/></svg></div>
<div class="lab w" style="left:622px;top:358px">27</div>
<div class="sunk e" style="left:660px;top:323px"><svg width="30" height="30" viewBox="0 0 30 30"><path d="M1 1L29 29M29 1L1 29" stroke="#808080" stroke-width="1.8"/>
<path d="M6 4.2L7.8 6L6 7.8L4.2 6ZM24 4.2L25.8 6L24 7.8L22.2 6ZM6 22.2L7.8 24L6 25.8L4.2 24ZM24 22.2L25.8 24L24 25.8L22.2 24Z" fill="#808080" stroke="#808080" stroke-width="0.6"/></svg></div>
<div class="lab w" style="left:661px;top:358px">28</div>
<div class="sunk e" style="left:699px;top:323px"><svg width="30" height="30" viewBox="0 0 30 30"><path d="M1 1L29 29M29 1L1 29" stroke="#808080" stroke-width="1.8"/>
<path d="M6 4.2L7.8 6L6 7.8L4.2 6ZM24 4.2L25.8 6L24 7.8L22.2 6ZM6 22.2L7.8 24L6 25.8L4.2 24ZM24 22.2L25.8 24L24 25.8L22.2 24Z" fill="#808080" stroke="#808080" stroke-width="0.6"/></svg></div>
<div class="lab w" style="left:700px;top:358px">29</div>
<div class="sunk e" style="left:738px;top:323px"><svg width="30" height="30" viewBox="0 0 30 30"><path d="M1 1L29 29M29 1L1 29" stroke="#808080" stroke-width="1.8"/>
<path d="M6 4.2L7.8 6L6 7.8L4.2 6ZM24 4.2L25.8 6L24 7.8L22.2 6ZM6 22.2L7.8 24L6 25.8L4.2 24ZM24 22.2L25.8 24L24 25.8L22.2 24Z" fill="#808080" stroke="#808080" stroke-width="0.6"/></svg></div>
<div class="lab w" style="left:739px;top:358px">30</div>
<div class="sunk e" style="left:777px;top:323px"><svg width="30" height="30" viewBox="0 0 30 30"><path d="M1 1L29 29M29 1L1 29" stroke="#808080" stroke-width="1.8"/>
<path d="M6 4.2L7.8 6L6 7.8L4.2 6ZM24 4.2L25.8 6L24 7.8L22.2 6ZM6 22.2L7.8 24L6 25.8L4.2 24ZM24 22.2L25.8 24L24 25.8L22.2 24Z" fill="#808080" stroke="#808080" stroke-width="0.6"/></svg></div>
<div class="lab w" style="left:778px;top:358px">31</div>
<div class="sunk e" style="left:816px;top:323px"><svg width="30" height="30" viewBox="0 0 30 30"><path d="M1 1L29 29M29 1L1 29" stroke="#808080" stroke-width="1.8"/>
<path d="M6 4.2L7.8 6L6 7.8L4.2 6ZM24 4.2L25.8 6L24 7.8L22.2 6ZM6 22.2L7.8 24L6 25.8L4.2 24ZM24 22.2L25.8 24L24 25.8L22.2 24Z" fill="#808080" stroke="#808080" stroke-width="0.6"/></svg></div>
<div class="lab w" style="left:817px;top:358px">32</div>
<div class="sunk e" style="left:855px;top:323px"><svg width="30" height="30" viewBox="0 0 30 30"><path d="M1 1L29 29M29 1L1 29" stroke="#808080" stroke-width="1.8"/>
<path d="M6 4.2L7.8 6L6 7.8L4.2 6ZM24 4.2L25.8 6L24 7.8L22.2 6ZM6 22.2L7.8 24L6 25.8L4.2 24ZM24 22.2L25.8 24L24 25.8L22.2 24Z" fill="#808080" stroke="#808080" stroke-width="0.6"/></svg></div>
<div class="lab w" style="left:856px;top:358px">33</div>
<div class="sunk e" style="left:894px;top:323px"><svg width="30" height="30" viewBox="0 0 30 30"><path d="M1 1L29 29M29 1L1 29" stroke="#808080" stroke-width="1.8"/>
<path d="M6 4.2L7.8 6L6 7.8L4.2 6ZM24 4.2L25.8 6L24 7.8L22.2 6ZM6 22.2L7.8 24L6 25.8L4.2 24ZM24 22.2L25.8 24L24 25.8L22.2 24Z" fill="#808080" stroke="#808080" stroke-width="0.6"/></svg></div>
<div class="lab w" style="left:895px;top:358px">34</div>
<div class="sunk e" style="left:933px;top:323px"><svg width="30" height="30" viewBox="0 0 30 30"><path d="M1 1L29 29M29 1L1 29" stroke="#808080" stroke-width="1.8"/>
<path d="M6 4.2L7.8 6L6 7.8L4.2 6ZM24 4.2L25.8 6L24 7.8L22.2 6ZM6 22.2L7.8 24L6 25.8L4.2 24ZM24 22.2L25.8 24L24 25.8L22.2 24Z" fill="#808080" stroke="#808080" stroke-width="0.6"/></svg></div>
<div class="lab w" style="left:934px;top:358px">35</div>
<div class="sunk e" style="left:972px;top:323px"><svg width="30" height="30" viewBox="0 0 30 30"><path d="M1 1L29 29M29 1L1 29" stroke="#808080" stroke-width="1.8"/>
<path d="M6 4.2L7.8 6L6 7.8L4.2 6ZM24 4.2L25.8 6L24 7.8L22.2 6ZM6 22.2L7.8 24L6 25.8L4.2 24ZM24 22.2L25.8 24L24 25.8L22.2 24Z" fill="#808080" stroke="#808080" stroke-width="0.6"/></svg></div>
<div class="lab w" style="left:973px;top:358px">36</div>
<div class="sunk e" style="left:309px;top:374px"><svg width="30" height="30" viewBox="0 0 30 30"><path d="M1 1L29 29M29 1L1 29" stroke="#808080" stroke-width="1.8"/>
<path d="M6 4.2L7.8 6L6 7.8L4.2 6ZM24 4.2L25.8 6L24 7.8L22.2 6ZM6 22.2L7.8 24L6 25.8L4.2 24ZM24 22.2L25.8 24L24 25.8L22.2 24Z" fill="#808080" stroke="#808080" stroke-width="0.6"/></svg></div>
<div class="lab w" style="left:310px;top:409px">37</div>
<div class="sunk e" style="left:348px;top:374px"><svg width="30" height="30" viewBox="0 0 30 30"><path d="M1 1L29 29M29 1L1 29" stroke="#808080" stroke-width="1.8"/>
<path d="M6 4.2L7.8 6L6 7.8L4.2 6ZM24 4.2L25.8 6L24 7.8L22.2 6ZM6 22.2L7.8 24L6 25.8L4.2 24ZM24 22.2L25.8 24L24 25.8L22.2 24Z" fill="#808080" stroke="#808080" stroke-width="0.6"/></svg></div>
<div class="lab w" style="left:349px;top:409px">38</div>
<div class="sunk e" style="left:387px;top:374px"><svg width="30" height="30" viewBox="0 0 30 30"><path d="M1 1L29 29M29 1L1 29" stroke="#808080" stroke-width="1.8"/>
<path d="M6 4.2L7.8 6L6 7.8L4.2 6ZM24 4.2L25.8 6L24 7.8L22.2 6ZM6 22.2L7.8 24L6 25.8L4.2 24ZM24 22.2L25.8 24L24 25.8L22.2 24Z" fill="#808080" stroke="#808080" stroke-width="0.6"/></svg></div>
<div class="lab w" style="left:388px;top:409px">39</div>
<div class="sunk e" style="left:426px;top:374px"><svg width="30" height="30" viewBox="0 0 30 30"><path d="M1 1L29 29M29 1L1 29" stroke="#808080" stroke-width="1.8"/>
<path d="M6 4.2L7.8 6L6 7.8L4.2 6ZM24 4.2L25.8 6L24 7.8L22.2 6ZM6 22.2L7.8 24L6 25.8L4.2 24ZM24 22.2L25.8 24L24 25.8L22.2 24Z" fill="#808080" stroke="#808080" stroke-width="0.6"/></svg></div>
<div class="lab w" style="left:427px;top:409px">40</div>
<div class="sunk e" style="left:465px;top:374px"><svg width="30" height="30" viewBox="0 0 30 30"><path d="M1 1L29 29M29 1L1 29" stroke="#808080" stroke-width="1.8"/>
<path d="M6 4.2L7.8 6L6 7.8L4.2 6ZM24 4.2L25.8 6L24 7.8L22.2 6ZM6 22.2L7.8 24L6 25.8L4.2 24ZM24 22.2L25.8 24L24 25.8L22.2 24Z" fill="#808080" stroke="#808080" stroke-width="0.6"/></svg></div>
<div class="lab w" style="left:466px;top:409px">41</div>
<div class="sunk e" style="left:504px;top:374px"><svg width="30" height="30" viewBox="0 0 30 30"><path d="M1 1L29 29M29 1L1 29" stroke="#808080" stroke-width="1.8"/>
<path d="M6 4.2L7.8 6L6 7.8L4.2 6ZM24 4.2L25.8 6L24 7.8L22.2 6ZM6 22.2L7.8 24L6 25.8L4.2 24ZM24 22.2L25.8 24L24 25.8L22.2 24Z" fill="#808080" stroke="#808080" stroke-width="0.6"/></svg></div>
<div class="lab w" style="left:505px;top:409px">42</div>
<div class="sunk e" style="left:543px;top:374px"><svg width="30" height="30" viewBox="0 0 30 30"><path d="M1 1L29 29M29 1L1 29" stroke="#808080" stroke-width="1.8"/>
<path d="M6 4.2L7.8 6L6 7.8L4.2 6ZM24 4.2L25.8 6L24 7.8L22.2 6ZM6 22.2L7.8 24L6 25.8L4.2 24ZM24 22.2L25.8 24L24 25.8L22.2 24Z" fill="#808080" stroke="#808080" stroke-width="0.6"/></svg></div>
<div class="lab w" style="left:544px;top:409px">43</div>
<div class="sunk e" style="left:582px;top:374px"><svg width="30" height="30" viewBox="0 0 30 30"><path d="M1 1L29 29M29 1L1 29" stroke="#808080" stroke-width="1.8"/>
<path d="M6 4.2L7.8 6L6 7.8L4.2 6ZM24 4.2L25.8 6L24 7.8L22.2 6ZM6 22.2L7.8 24L6 25.8L4.2 24ZM24 22.2L25.8 24L24 25.8L22.2 24Z" fill="#808080" stroke="#808080" stroke-width="0.6"/></svg></div>
<div class="lab w" style="left:583px;top:409px">44</div>
<div class="sunk e" style="left:621px;top:374px"><svg width="30" height="30" viewBox="0 0 30 30"><path d="M1 1L29 29M29 1L1 29" stroke="#808080" stroke-width="1.8"/>
<path d="M6 4.2L7.8 6L6 7.8L4.2 6ZM24 4.2L25.8 6L24 7.8L22.2 6ZM6 22.2L7.8 24L6 25.8L4.2 24ZM24 22.2L25.8 24L24 25.8L22.2 24Z" fill="#808080" stroke="#808080" stroke-width="0.6"/></svg></div>
<div class="lab w" style="left:622px;top:409px">45</div>
<div class="sunk e" style="left:660px;top:374px"><svg width="30" height="30" viewBox="0 0 30 30"><path d="M1 1L29 29M29 1L1 29" stroke="#808080" stroke-width="1.8"/>
<path d="M6 4.2L7.8 6L6 7.8L4.2 6ZM24 4.2L25.8 6L24 7.8L22.2 6ZM6 22.2L7.8 24L6 25.8L4.2 24ZM24 22.2L25.8 24L24 25.8L22.2 24Z" fill="#808080" stroke="#808080" stroke-width="0.6"/></svg></div>
<div class="lab w" style="left:661px;top:409px">46</div>
<div class="sunk e" style="left:699px;top:374px"><svg width="30" height="30" viewBox="0 0 30 30"><path d="M1 1L29 29M29 1L1 29" stroke="#808080" stroke-width="1.8"/>
<path d="M6 4.2L7.8 6L6 7.8L4.2 6ZM24 4.2L25.8 6L24 7.8L22.2 6ZM6 22.2L7.8 24L6 25.8L4.2 24ZM24 22.2L25.8 24L24 25.8L22.2 24Z" fill="#808080" stroke="#808080" stroke-width="0.6"/></svg></div>
<div class="lab w" style="left:700px;top:409px">47</div>
<div class="sunk e" style="left:738px;top:374px"><svg width="30" height="30" viewBox="0 0 30 30"><path d="M1 1L29 29M29 1L1 29" stroke="#808080" stroke-width="1.8"/>
<path d="M6 4.2L7.8 6L6 7.8L4.2 6ZM24 4.2L25.8 6L24 7.8L22.2 6ZM6 22.2L7.8 24L6 25.8L4.2 24ZM24 22.2L25.8 24L24 25.8L22.2 24Z" fill="#808080" stroke="#808080" stroke-width="0.6"/></svg></div>
<div class="lab w" style="left:739px;top:409px">48</div>
<div class="sunk e" style="left:777px;top:374px"><svg width="30" height="30" viewBox="0 0 30 30"><path d="M1 1L29 29M29 1L1 29" stroke="#808080" stroke-width="1.8"/>
<path d="M6 4.2L7.8 6L6 7.8L4.2 6ZM24 4.2L25.8 6L24 7.8L22.2 6ZM6 22.2L7.8 24L6 25.8L4.2 24ZM24 22.2L25.8 24L24 25.8L22.2 24Z" fill="#808080" stroke="#808080" stroke-width="0.6"/></svg></div>
<div class="lab w" style="left:778px;top:409px">49</div>
<div class="sunk e" style="left:816px;top:374px"><svg width="30" height="30" viewBox="0 0 30 30"><path d="M1 1L29 29M29 1L1 29" stroke="#808080" stroke-width="1.8"/>
<path d="M6 4.2L7.8 6L6 7.8L4.2 6ZM24 4.2L25.8 6L24 7.8L22.2 6ZM6 22.2L7.8 24L6 25.8L4.2 24ZM24 22.2L25.8 24L24 25.8L22.2 24Z" fill="#808080" stroke="#808080" stroke-width="0.6"/></svg></div>
<div class="lab w" style="left:817px;top:409px">50</div>
<div class="sunk e" style="left:855px;top:374px"><svg width="30" height="30" viewBox="0 0 30 30"><path d="M1 1L29 29M29 1L1 29" stroke="#808080" stroke-width="1.8"/>
<path d="M6 4.2L7.8 6L6 7.8L4.2 6ZM24 4.2L25.8 6L24 7.8L22.2 6ZM6 22.2L7.8 24L6 25.8L4.2 24ZM24 22.2L25.8 24L24 25.8L22.2 24Z" fill="#808080" stroke="#808080" stroke-width="0.6"/></svg></div>
<div class="lab w" style="left:856px;top:409px">51</div>
<div class="sunk e" style="left:894px;top:374px"><svg width="30" height="30" viewBox="0 0 30 30"><path d="M1 1L29 29M29 1L1 29" stroke="#808080" stroke-width="1.8"/>
<path d="M6 4.2L7.8 6L6 7.8L4.2 6ZM24 4.2L25.8 6L24 7.8L22.2 6ZM6 22.2L7.8 24L6 25.8L4.2 24ZM24 22.2L25.8 24L24 25.8L22.2 24Z" fill="#808080" stroke="#808080" stroke-width="0.6"/></svg></div>
<div class="lab w" style="left:895px;top:409px">52</div>
<div class="sunk e" style="left:933px;top:374px"><svg width="30" height="30" viewBox="0 0 30 30"><path d="M1 1L29 29M29 1L1 29" stroke="#808080" stroke-width="1.8"/>
<path d="M6 4.2L7.8 6L6 7.8L4.2 6ZM24 4.2L25.8 6L24 7.8L22.2 6ZM6 22.2L7.8 24L6 25.8L4.2 24ZM24 22.2L25.8 24L24 25.8L22.2 24Z" fill="#808080" stroke="#808080" stroke-width="0.6"/></svg></div>
<div class="lab w" style="left:934px;top:409px">53</div>
<div class="sunk e" style="left:972px;top:374px"><svg width="30" height="30" viewBox="0 0 30 30"><path d="M1 1L29 29M29 1L1 29" stroke="#808080" stroke-width="1.8"/>
<path d="M6 4.2L7.8 6L6 7.8L4.2 6ZM24 4.2L25.8 6L24 7.8L22.2 6ZM6 22.2L7.8 24L6 25.8L4.2 24ZM24 22.2L25.8 24L24 25.8L22.2 24Z" fill="#808080" stroke="#808080" stroke-width="0.6"/></svg></div>
<div class="lab w" style="left:973px;top:409px">54</div>
<div class="sunk e" style="left:309px;top:425px"><svg width="30" height="30" viewBox="0 0 30 30"><path d="M1 1L29 29M29 1L1 29" stroke="#808080" stroke-width="1.8"/>
<path d="M6 4.2L7.8 6L6 7.8L4.2 6ZM24 4.2L25.8 6L24 7.8L22.2 6ZM6 22.2L7.8 24L6 25.8L4.2 24ZM24 22.2L25.8 24L24 25.8L22.2 24Z" fill="#808080" stroke="#808080" stroke-width="0.6"/></svg></div>
<div class="lab w" style="left:310px;top:460px">55</div>
<div class="sunk e" style="left:348px;top:425px"><svg width="30" height="30" viewBox="0 0 30 30"><path d="M1 1L29 29M29 1L1 29" stroke="#808080" stroke-width="1.8"/>
<path d="M6 4.2L7.8 6L6 7.8L4.2 6ZM24 4.2L25.8 6L24 7.8L22.2 6ZM6 22.2L7.8 24L6 25.8L4.2 24ZM24 22.2L25.8 24L24 25.8L22.2 24Z" fill="#808080" stroke="#808080" stroke-width="0.6"/></svg></div>
<div class="lab w" style="left:349px;top:460px">56</div>
<div class="sunk e" style="left:387px;top:425px"><svg width="30" height="30" viewBox="0 0 30 30"><path d="M1 1L29 29M29 1L1 29" stroke="#808080" stroke-width="1.8"/>
<path d="M6 4.2L7.8 6L6 7.8L4.2 6ZM24 4.2L25.8 6L24 7.8L22.2 6ZM6 22.2L7.8 24L6 25.8L4.2 24ZM24 22.2L25.8 24L24 25.8L22.2 24Z" fill="#808080" stroke="#808080" stroke-width="0.6"/></svg></div>
<div class="lab w" style="left:388px;top:460px">57</div>
<div class="sunk e" style="left:426px;top:425px"><svg width="30" height="30" viewBox="0 0 30 30"><path d="M1 1L29 29M29 1L1 29" stroke="#808080" stroke-width="1.8"/>
<path d="M6 4.2L7.8 6L6 7.8L4.2 6ZM24 4.2L25.8 6L24 7.8L22.2 6ZM6 22.2L7.8 24L6 25.8L4.2 24ZM24 22.2L25.8 24L24 25.8L22.2 24Z" fill="#808080" stroke="#808080" stroke-width="0.6"/></svg></div>
<div class="lab w" style="left:427px;top:460px">58</div>
<div class="sunk e" style="left:465px;top:425px"><svg width="30" height="30" viewBox="0 0 30 30"><path d="M1 1L29 29M29 1L1 29" stroke="#808080" stroke-width="1.8"/>
<path d="M6 4.2L7.8 6L6 7.8L4.2 6ZM24 4.2L25.8 6L24 7.8L22.2 6ZM6 22.2L7.8 24L6 25.8L4.2 24ZM24 22.2L25.8 24L24 25.8L22.2 24Z" fill="#808080" stroke="#808080" stroke-width="0.6"/></svg></div>
<div class="lab w" style="left:466px;top:460px">59</div>
<div class="sunk e" style="left:504px;top:425px"><svg width="30" height="30" viewBox="0 0 30 30"><path d="M1 1L29 29M29 1L1 29" stroke="#808080" stroke-width="1.8"/>
<path d="M6 4.2L7.8 6L6 7.8L4.2 6ZM24 4.2L25.8 6L24 7.8L22.2 6ZM6 22.2L7.8 24L6 25.8L4.2 24ZM24 22.2L25.8 24L24 25.8L22.2 24Z" fill="#808080" stroke="#808080" stroke-width="0.6"/></svg></div>
<div class="lab w" style="left:505px;top:460px">60</div>
<div class="sunk e" style="left:543px;top:425px"><svg width="30" height="30" viewBox="0 0 30 30"><path d="M1 1L29 29M29 1L1 29" stroke="#808080" stroke-width="1.8"/>
<path d="M6 4.2L7.8 6L6 7.8L4.2 6ZM24 4.2L25.8 6L24 7.8L22.2 6ZM6 22.2L7.8 24L6 25.8L4.2 24ZM24 22.2L25.8 24L24 25.8L22.2 24Z" fill="#808080" stroke="#808080" stroke-width="0.6"/></svg></div>
<div class="lab w" style="left:544px;top:460px">61</div>
<div class="sunk e" style="left:582px;top:425px"><svg width="30" height="30" viewBox="0 0 30 30"><path d="M1 1L29 29M29 1L1 29" stroke="#808080" stroke-width="1.8"/>
<path d="M6 4.2L7.8 6L6 7.8L4.2 6ZM24 4.2L25.8 6L24 7.8L22.2 6ZM6 22.2L7.8 24L6 25.8L4.2 24ZM24 22.2L25.8 24L24 25.8L22.2 24Z" fill="#808080" stroke="#808080" stroke-width="0.6"/></svg></div>
<div class="lab w" style="left:583px;top:460px">62</div>
<div class="sunk e" style="left:621px;top:425px"><svg width="30" height="30" viewBox="0 0 30 30"><path d="M1 1L29 29M29 1L1 29" stroke="#808080" stroke-width="1.8"/>
<path d="M6 4.2L7.8 6L6 7.8L4.2 6ZM24 4.2L25.8 6L24 7.8L22.2 6ZM6 22.2L7.8 24L6 25.8L4.2 24ZM24 22.2L25.8 24L24 25.8L22.2 24Z" fill="#808080" stroke="#808080" stroke-width="0.6"/></svg></div>
<div class="lab w" style="left:622px;top:460px">63</div>
<div class="sunk e" style="left:660px;top:425px"><svg width="30" height="30" viewBox="0 0 30 30"><path d="M1 1L29 29M29 1L1 29" stroke="#808080" stroke-width="1.8"/>
<path d="M6 4.2L7.8 6L6 7.8L4.2 6ZM24 4.2L25.8 6L24 7.8L22.2 6ZM6 22.2L7.8 24L6 25.8L4.2 24ZM24 22.2L25.8 24L24 25.8L22.2 24Z" fill="#808080" stroke="#808080" stroke-width="0.6"/></svg></div>
<div class="lab w" style="left:661px;top:460px">64</div>
<div class="a" style="left:890px;top:425px;width:4px;height:50px;background:#99cdff"></div>
<div class="a" style="left:891px;top:270px;width:40px;height:52px;border:2px solid #f00a14"></div>
<div class="a" style="left:31px;top:614px;width:249px;height:42px;border:2px solid #f00a14"></div>
<svg class="a" style="left:0;top:0" width="1054" height="703" viewBox="0 0 1054 703">
<path d="M900 270L919.5 233.5H939.5" fill="none" stroke="#f00a14" stroke-width="1"/>
<path d="M280 640.5L330 623.5H350" fill="none" stroke="#f00a14" stroke-width="1"/>
<text x="929" y="227" font-family="Liberation Sans, sans-serif" font-size="18.5" fill="#f00a14" text-anchor="middle">6</text>
<text x="339.5" y="617" font-family="Liberation Sans, sans-serif" font-size="18.5" fill="#f00a14" text-anchor="middle">5</text>
</svg>
<div class="a" style="left:0;top:694px;width:1054px;height:9px;background:#fff"></div>
<div class="a" style="left:3px;top:694px;width:1048px;height:3px;background:linear-gradient(#a8a8a8,#a8a8a8 1px,#7c7c7c 1px,#7c7c7c 2px,#b4b4b4 2px)"></div>
</body></html>
